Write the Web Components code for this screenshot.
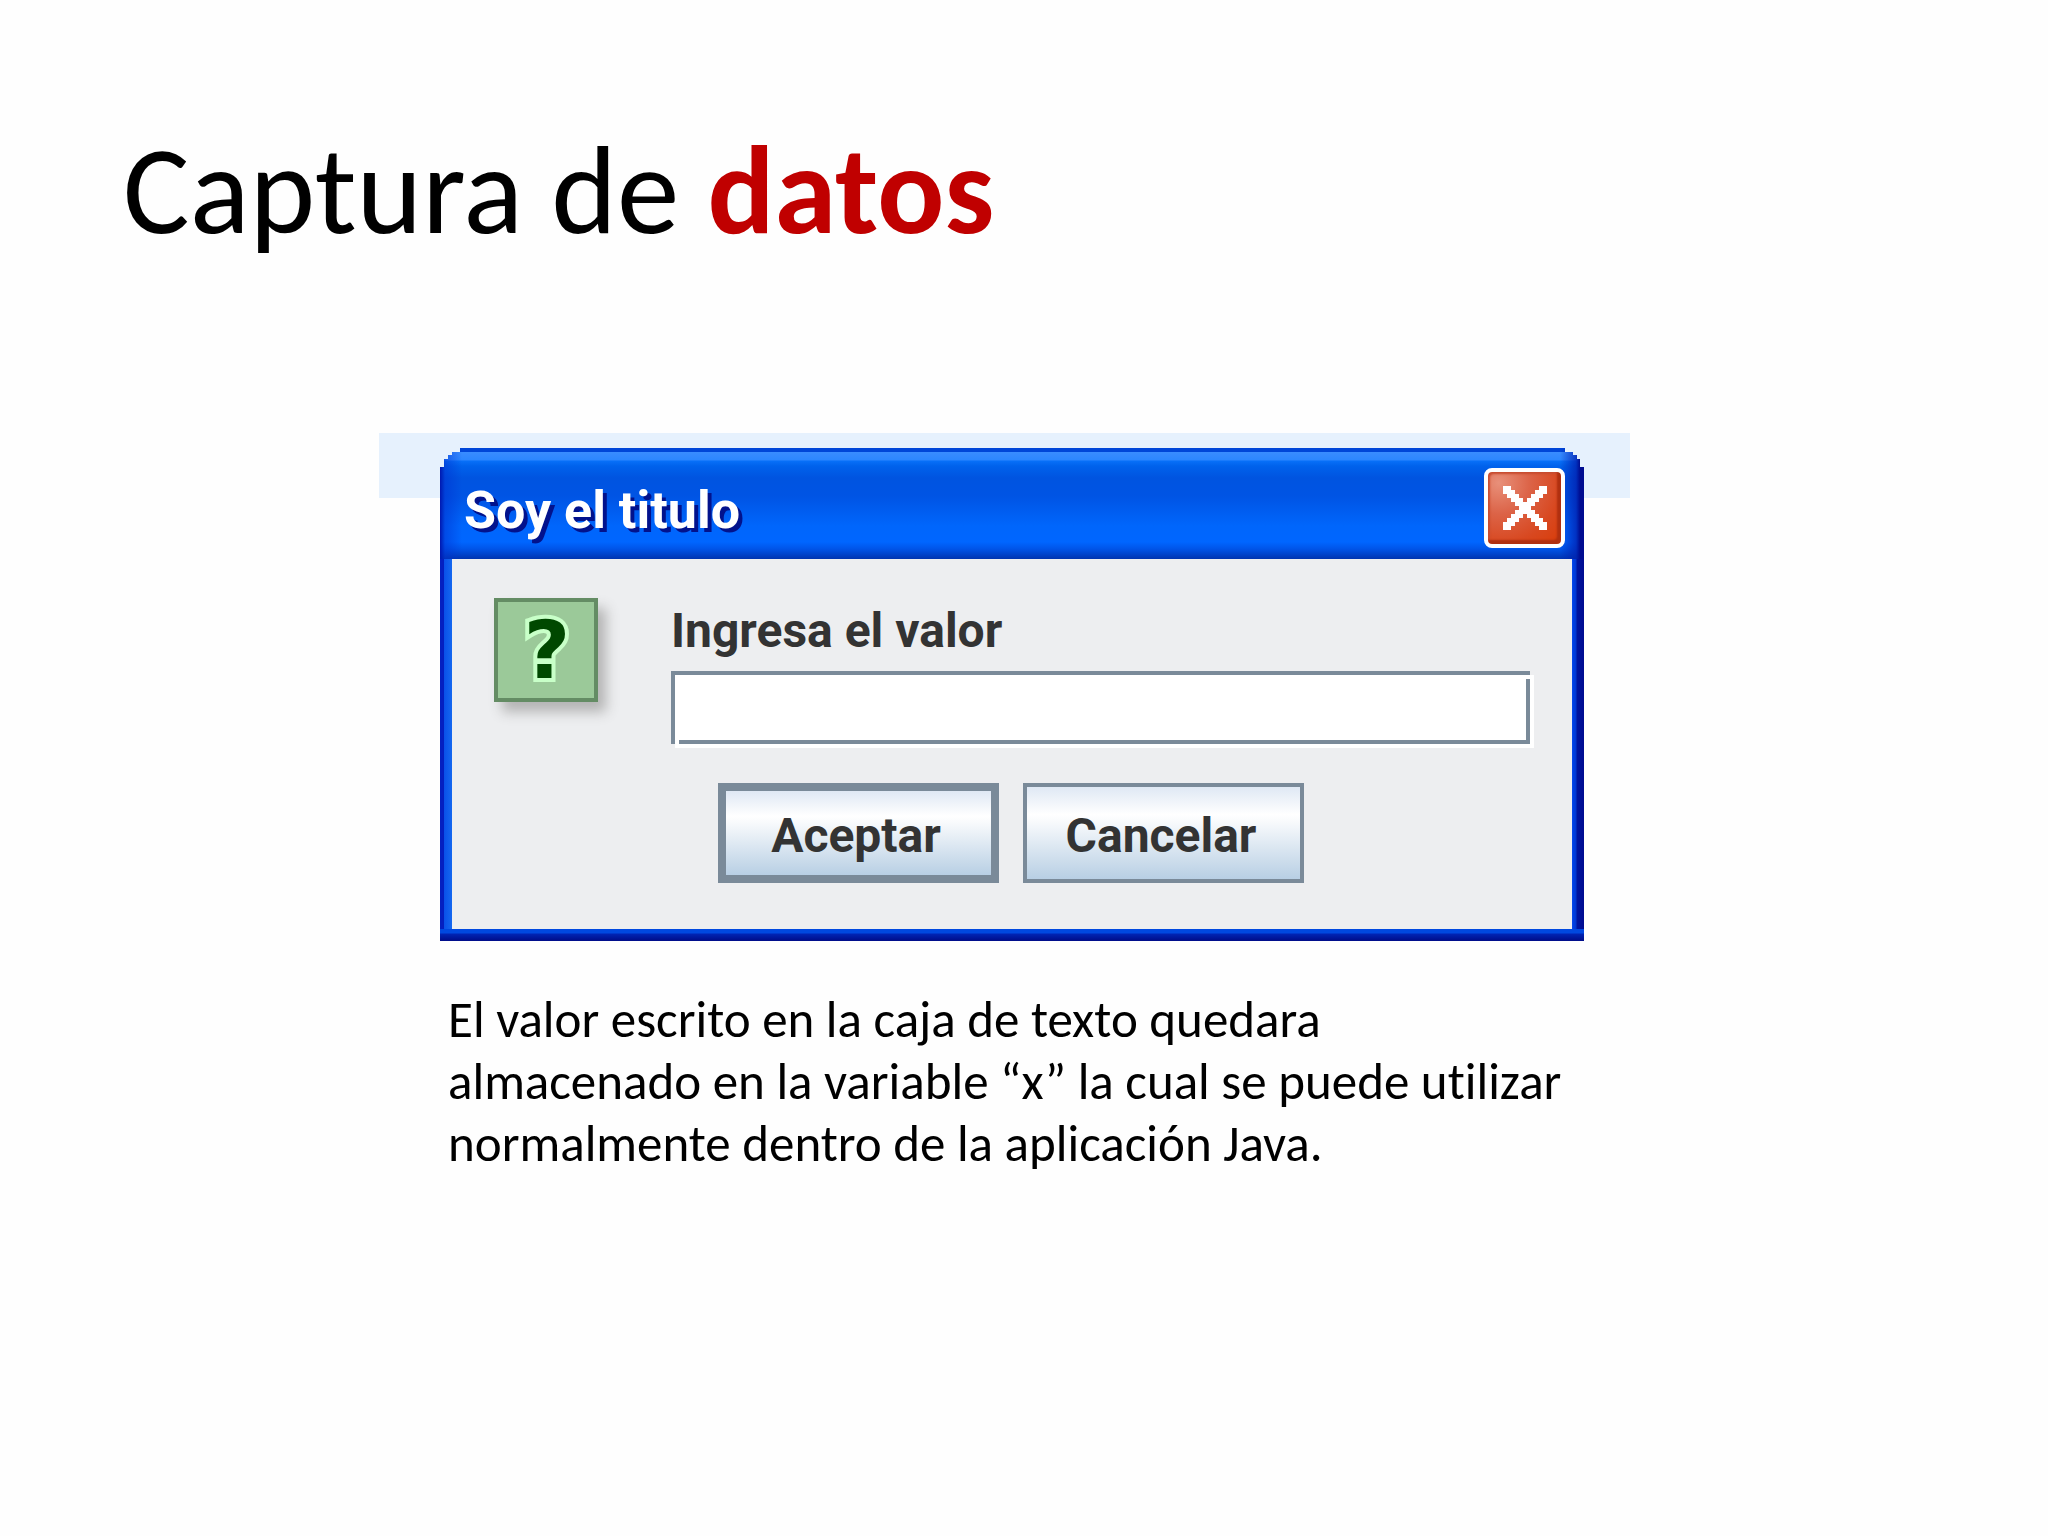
<!DOCTYPE html>
<html lang="es">
<head>
<meta charset="utf-8">
<title>Captura de datos</title>
<style>
    body {
        margin: 0;
        background: #fefefe;
        color: #000;
        font-family: Carlito, Calibri, Lato, sans-serif;
        font-variant-ligatures: none;
    }
    h1 strong {
        color: #c00000;
    }
</style>
</head>
<body>
<slide-page>
    <h1 slot="title">Captura de <strong>datos</strong></h1>
    <window-stage>
        <xp-window heading="Soy el titulo">
            <question-icon slot="icon"></question-icon>
            <prompt-field label="Ingresa el valor"></prompt-field>
            <metal-button slot="actions" primary>Aceptar</metal-button>
            <metal-button slot="actions">Cancelar</metal-button>
        </xp-window>
    </window-stage>
    <p slot="note">El valor escrito en la caja de texto quedara almacenado en la variable “x” la cual se puede utilizar normalmente dentro de la aplicación Java.</p>
</slide-page>

<script>
class SlidePage extends HTMLElement {
    connectedCallback() {
        this.attachShadow({ mode: 'open' });
        this.shadowRoot.innerHTML = `
            <style>
                :host {
                    display: flex;
                    flex-direction: column;
                    min-height: 100vh;
                    box-sizing: border-box;
                    padding-top: 115px;
                }
                header {
                    padding: 0 123px;
                    margin-bottom: 166px;
                }
                .content {
                    display: grid;
                    grid-template-columns: 379fr 1251fr 418fr;
                }
                .content > * {
                    grid-column: 2;
                }
                .note {
                    padding: 0 54px 0 69px;
                    margin-top: 48px;
                }
                ::slotted(h1) {
                    margin: 0;
                    font-size: 125px;
                    line-height: 152px;
                    font-weight: 400;
                }
                ::slotted(p) {
                    margin: 0;
                    font-size: 51px;
                    line-height: 62px;
                }
            </style>
            <header><slot name="title"></slot></header>
            <div class="content">
                <slot></slot>
                <div class="note"><slot name="note"></slot></div>
            </div>
        `;
    }
}

// Pale strip that shows behind the top of the window
class WindowStage extends HTMLElement {
    connectedCallback() {
        this.attachShadow({ mode: 'open' });
        this.shadowRoot.innerHTML = `
            <style>
                :host {
                    display: block;
                    grid-column: 2;
                    padding: 15px 46px 0 61px;
                    background: linear-gradient(#e6f1fd, #e6f1fd) 0 0 / 100% 65px no-repeat;
                }
            </style>
            <slot></slot>
        `;
    }
}

class XpWindow extends HTMLElement {
    connectedCallback() {
        const heading = this.getAttribute('heading') || '';

        this.attachShadow({ mode: 'open' });
        this.shadowRoot.innerHTML = `
            <style>
                :host {
                    display: block;
                    font-family: Roboto, "Liberation Sans", sans-serif;
                    color: #333;
                }
                section {
                    background: linear-gradient(90deg, #0420c0 0 4px, #0a50e8 4px, #1468f0 12px, #0a50e8 12px calc(100% - 12px), #0040e8 calc(100% - 11px), #0038d0 calc(100% - 8px), #0014a0 calc(100% - 7px), #000c90);
                    clip-path: polygon(
                        0 19px, 4px 19px, 4px 11px, 8px 11px, 8px 7px, 12px 7px, 12px 4px, 20px 4px, 20px 0,
                        calc(100% - 19px) 0, calc(100% - 19px) 4px, calc(100% - 11px) 4px, calc(100% - 11px) 7px,
                        calc(100% - 7px) 7px, calc(100% - 7px) 11px, calc(100% - 4px) 11px, calc(100% - 4px) 19px,
                        100% 19px, 100% 100%, 0 100%);
                }
                header {
                    display: flex;
                    align-items: center;
                    justify-content: space-between;
                    height: 111px;
                    box-sizing: border-box;
                    padding: 8px 19px 0 24px;
                    background:
                        linear-gradient(90deg, #0018b0 0, #0030d080 5px, #0050e800 22px),
                        linear-gradient(270deg, #000c90 0 4px, #0020b0c0 8px, #0040d000 24px),
                        linear-gradient(#0046d8 0 4px, #3a8cff 4px, #2c86ff 12px, #0870f8 13px, #0062ec 18px, #0054e0 30px, #0054e4 48px, #0066fc 78px, #0066ff 94px, #0054e8 101px, #0044cc 106px, #0034b0 111px);
                }
                h2 {
                    margin: 0;
                    padding-top: 6px;
                    font-size: 52px;
                    line-height: 60px;
                    font-weight: 700;
                    color: #fff;
                    text-shadow: 4px 4px 0 #02128c;
                }
                .close {
                    display: flex;
                    align-items: center;
                    justify-content: center;
                    width: 81px;
                    height: 80px;
                    padding: 0;
                    border: 4px solid #fff;
                    border-radius: 8px;
                    background: radial-gradient(circle at 15% 15%, #e8907a 0, #dc6448 35%, #d84820 70%, #d83c08 100%);
                    box-shadow: inset -4px -4px 2px #b03010, inset 2px 2px 2px #c84c30;
                }
                .body {
                    margin: 0 12px;
                    padding: 39px 42px 46px;
                    background: #edeef0;
                }
                .prompt {
                    display: flex;
                    align-items: flex-start;
                    gap: 73px;
                }
                .field {
                    flex: 1;
                }
                .actions {
                    display: flex;
                    justify-content: center;
                    gap: 24px;
                    margin-top: 39px;
                    padding-right: 3px;
                }
                footer {
                    height: 12px;
                    background: linear-gradient(#0048e0 0 4px, #0024b4 5px, #000c88 12px);
                }
            </style>
            <section>
                <header>
                    <h2>${heading}</h2>
                    <button class="close" type="button" aria-label="Cerrar">
                        <svg width="44" height="44" viewBox="0 0 11 11" shape-rendering="crispEdges" fill="#fff">
                            <path d="M0 0h2v1h-2zM9 0h2v1h-2zM0 1h3v1h-3zM8 1h3v1h-3zM1 2h3v1h-3zM7 2h3v1h-3zM2 3h3v1h-3zM6 3h3v1h-3zM3 4h5v1h-5zM4 5h3v1h-3zM3 6h5v1h-5zM2 7h3v1h-3zM6 7h3v1h-3zM1 8h3v1h-3zM7 8h3v1h-3zM0 9h3v1h-3zM8 9h3v1h-3zM0 10h2v1h-2zM9 10h2v1h-2z"/>
                        </svg>
                    </button>
                </header>
                <div class="body">
                    <div class="prompt">
                        <slot name="icon"></slot>
                        <div class="field"><slot></slot></div>
                    </div>
                    <div class="actions"><slot name="actions"></slot></div>
                </div>
                <footer></footer>
            </section>
        `;
    }
}

class QuestionIcon extends HTMLElement {
    connectedCallback() {
        this.attachShadow({ mode: 'open' });
        this.shadowRoot.innerHTML = `
            <style>
                :host {
                    display: block;
                    box-sizing: border-box;
                    width: 104px;
                    height: 104px;
                    border: 4px solid #648c64;
                    background: #9bc999;
                    box-shadow: 8px 10px 12px #b4b4b4;
                }
                svg {
                    display: block;
                }
                text {
                    font: 700 80px "DejaVu Sans", sans-serif;
                    fill: #004800;
                    stroke: #c8ffc8;
                    stroke-width: 8px;
                    paint-order: stroke;
                }
                .core {
                    stroke: #004800;
                    stroke-width: 2px;
                }
            </style>
            <svg width="96" height="96" viewBox="0 0 96 96" aria-hidden="true">
                <text x="49" y="76" text-anchor="middle">?</text>
            </svg>
        `;
    }
}

class PromptField extends HTMLElement {
    connectedCallback() {
        const label = this.getAttribute('label') || '';

        this.attachShadow({ mode: 'open' });
        this.shadowRoot.innerHTML = `
            <style>
                :host {
                    display: block;
                }
                label {
                    display: block;
                    margin-bottom: 7px;
                    font-size: 48px;
                    line-height: 66px;
                    font-weight: 700;
                }
                input {
                    --line: linear-gradient(#7a8a99, #7a8a99);
                    display: block;
                    width: 100%;
                    height: 73px;
                    box-sizing: border-box;
                    padding: 4px 12px;
                    border: none;
                    border-radius: 0;
                    outline: none;
                    font: inherit;
                    font-size: 48px;
                    background:
                        var(--line) 0 0 / 100% 4px no-repeat,
                        var(--line) 0 0 / 4px 100% no-repeat,
                        var(--line) 100% 100% / 4px calc(100% - 8px) no-repeat,
                        var(--line) 100% 100% / calc(100% - 8px) 4px no-repeat,
                        #fff;
                    box-shadow: 4px 4px 0 #fff;
                }
            </style>
            <label for="value">${label}</label>
            <input type="text" id="value" name="value">
        `;
    }
}

class MetalButton extends HTMLElement {
    connectedCallback() {
        this.attachShadow({ mode: 'open' });
        this.shadowRoot.innerHTML = `
            <style>
                :host {
                    display: block;
                }
                button {
                    width: 281px;
                    height: 100px;
                    padding: 4px 4px 0 0;
                    border: 4px solid #7a8a99;
                    border-radius: 0;
                    background: linear-gradient(#dfe8f4, #fff 30%, #f8fafc 38%, #b8cfe4);
                    color: #333;
                    font: inherit;
                    font-size: 48px;
                    font-weight: 700;
                }
                :host([primary]) button {
                    border-width: 8px;
                }
            </style>
            <button type="button"><slot></slot></button>
        `;
    }
}

customElements.define('slide-page', SlidePage);
customElements.define('window-stage', WindowStage);
customElements.define('xp-window', XpWindow);
customElements.define('question-icon', QuestionIcon);
customElements.define('prompt-field', PromptField);
customElements.define('metal-button', MetalButton);
</script>
</body>
</html>
